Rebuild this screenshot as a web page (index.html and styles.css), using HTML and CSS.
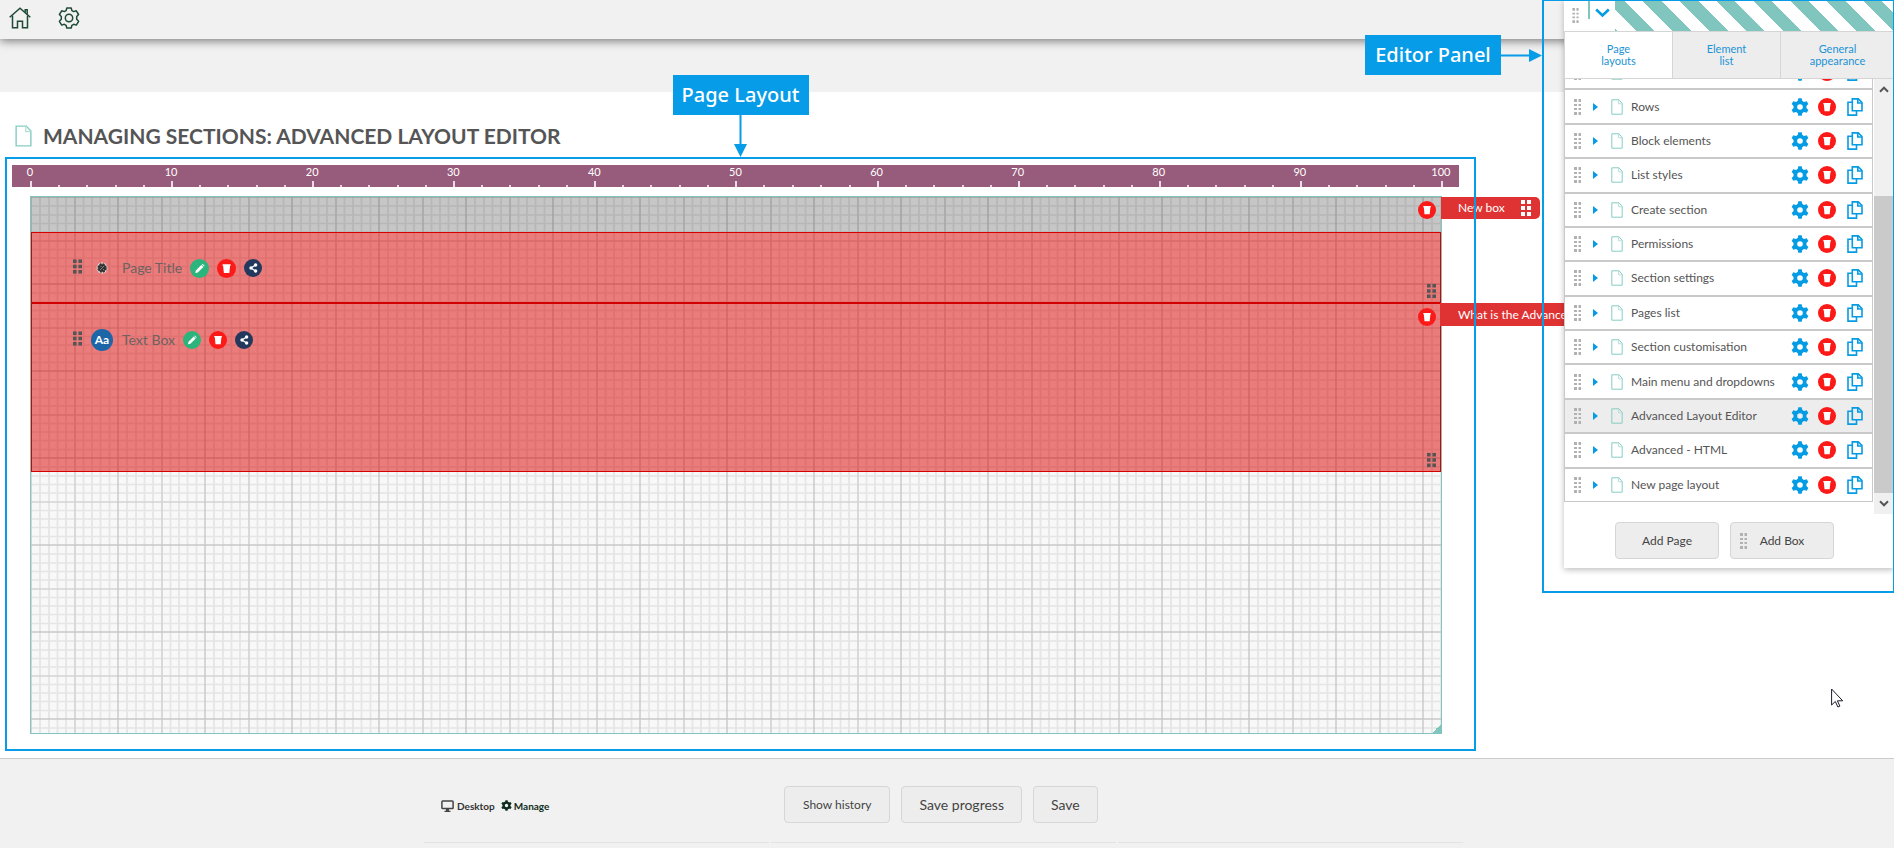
FILE: index.html
```html
<!DOCTYPE html>
<html lang="en">
<head>
<meta charset="utf-8">
<title>Managing sections: Advanced Layout Editor</title>
<link rel="stylesheet" href="styles.css">
</head>
<body>
<svg class="defs" aria-hidden="true">
  <symbol id="doc" viewBox="0 0 12 16"><path d="M.8.8h7.2l3.2 3.6v10.8H.8z" fill="none" stroke="#86cdc4"/><path d="M7.6 1v3.8h3.6" fill="none" stroke="#b5e0da"/></symbol>
  <symbol id="grip8" viewBox="0 0 7 16"><path d="M0 0h3v3H0zM4.500 0H7v3H4.500zM0 5h3v2H0zM4.500 5H7v2H4.500zM0 9h3v2H0zM4.500 9H7v2H4.500zM0 13h3v3H0zM4.500 13H7v3H4.500z" fill="currentColor"/></symbol>
  <symbol id="grip6" viewBox="0 0 10 16"><path d="M0 0h4v4H0zM6 0h4v4H6zM0 6h4v4H0zM6 6h4v4H6zM0 12h4v4H0zM6 12h4v4H6z" fill="currentColor"/></symbol>
  <symbol id="gear" viewBox="0 0 18 18"><g fill="currentColor"><path fill-rule="evenodd" d="M9 2.500a6.500 6.500 0 1 0 0 13A6.500 6.500 0 1 0 9 2.500zM9 6.200a2.800 2.800 0 1 1 0 5.600 2.800 2.800 0 1 1 0-5.600z"/><path id="tooth" d="M6.500 4l.8-3.700h3.400l.8 3.700z"/><use href="#tooth" transform="rotate(60 9 9)"/><use href="#tooth" transform="rotate(120 9 9)"/><use href="#tooth" transform="rotate(180 9 9)"/><use href="#tooth" transform="rotate(240 9 9)"/><use href="#tooth" transform="rotate(300 9 9)"/></g></symbol>
  <symbol id="trash" viewBox="0 0 18 18"><circle cx="9" cy="9" r="9" fill="#fb1a17"/><path d="M5.300 5h7.600v1.300H5.300zM5.800 6.300h6.600l-.7 7H6.500z" fill="#fff"/></symbol>
  <symbol id="pencil" viewBox="0 0 18 18"><circle cx="9" cy="9" r="9" fill="#2bb57c"/><path d="M5 13.200l.5-2.400 5.200-5.200 2 2-5.300 5.200zM11.200 5.100l.7-.6 1.900 1.900-.6.700z" fill="#fff"/></symbol>
  <symbol id="share" viewBox="0 0 18 18"><circle cx="9" cy="9" r="9" fill="#22385c"/><path d="M11.500 6L7 9l4.500 3" fill="none" stroke="#fff" stroke-width="1.300"/><circle cx="11.600" cy="6" r="1.700" fill="#fff"/><circle cx="7" cy="9" r="1.700" fill="#fff"/><circle cx="11.600" cy="12" r="1.700" fill="#fff"/></symbol>
  <symbol id="copy" viewBox="0 0 16 18"><g fill="none" stroke="#069ce3" stroke-width="1.600"><path d="M5.300.9h6L15 4.500v8.300H5.300z"/><path d="M10.800 1v4h4"/><path d="M5 4.300H1v12.800h8.500V13"/></g></symbol>
  <symbol id="tri" viewBox="0 0 5 8"><path d="M0 0l5 4-5 4z" fill="#069ce3"/></symbol>
</svg>

<header class="topbar">
  <a href="#" aria-label="Home"><svg width="22" height="22" viewBox="0 0 22 22"><g fill="none" stroke="#1f4a38" stroke-width="1.500"><path d="M.7 10.300L11 1.300l10.300 9"/><path d="M3.500 8.500v12.200h5v-6.500h5v6.500h5V8.500"/><path d="M16.200 5.500V2.800h2v4.500"/></g></svg></a>
  <a href="#" aria-label="Settings"><svg width="22" height="22" viewBox="0 0 22 22"><g fill="none" stroke="#1f4a38" stroke-width="1.500" stroke-linejoin="round"><path d="M8.800 1h4.400l.7 2.600 1.800 1 2.600-.8 2.300 3.700-1.900 2v2.800l1.900 2-2.300 3.800-2.600-.8-1.800 1-.7 2.700H8.800l-.7-2.700-1.800-1-2.600.8-2.300-3.800 1.900-2V9.500l-1.900-2 2.300-3.700 2.600.8 1.800-1z"/><circle cx="11" cy="11" r="3.700"/></g></svg></a>
</header>
<div class="subbar"></div>

<main class="main">
  <h1 class="title"><svg width="17" height="22" viewBox="0 0 12 16" preserveAspectRatio="none"><use href="#doc"/></svg>MANAGING SECTIONS: ADVANCED LAYOUT EDITOR</h1>

  <section class="workspace">
    <div class="ruler">
      <div class="seg"><span>0</span></div><div class="seg"><span>10</span></div><div class="seg"><span>20</span></div><div class="seg"><span>30</span></div><div class="seg"><span>40</span></div><div class="seg"><span>50</span></div><div class="seg"><span>60</span></div><div class="seg"><span>70</span></div><div class="seg"><span>80</span></div><div class="seg"><span>90</span></div><div class="seg last"><span>100</span></div>
    </div>
    <div class="canvas">
      <svg class="paper" aria-hidden="true">
        <defs><pattern id="grid" width="87" height="87" patternUnits="userSpaceOnUse">
          <rect width="87" height="87" fill="#f8f8f8"/>
          <path d="M9 0v87M18 0v87M26.500 0v87M35 0v87M52.500 0v87M61 0v87M69.500 0v87M78.500 0v87M0 9h87M0 18h87M0 26.500h87M0 35h87M0 52.500h87M0 61h87M0 69.500h87M0 78.500h87" stroke="#e5e5e5" stroke-width="1.700"/>
          <path d="M44 0v87M0 44h87" stroke="#d4d4d4" stroke-width="1.700"/>
          <path d="M87 0v87M0 87h87M0 0h87M0 0v87" stroke="#c8c8c8" stroke-width="1.400"/>
        </pattern></defs>
        <rect width="100%" height="100%" fill="url(#grid)"/>
      </svg>
      <div class="box box-new">
        <button class="icon del" aria-label="Delete box"><svg width="18" height="18"><use href="#trash"/></svg></button>
        <div class="tag"><span>New box</span><svg width="10" height="16"><use href="#grip6"/></svg></div>
      </div>
      <div class="box box-title">
        <div class="element">
          <svg class="grip" width="9" height="15" viewBox="0 0 10 16"><use href="#grip6"/></svg>
          <svg class="badge" width="22" height="22" viewBox="0 0 22 22"><circle cx="11" cy="11" r="4.800" fill="#e9dcdc" stroke="#e9dcdc" stroke-width="1.500" stroke-dasharray="2 1"/><circle cx="11" cy="11" r="3.800" fill="#333" stroke="#333" stroke-width="2" stroke-dasharray="2 1"/><path d="M9 13l4-4M9.500 10l1-1M12 13l1-1" stroke="#999" stroke-width=".8"/></svg>
          <span class="name">Page Title</span>
          <button class="icon" aria-label="Edit"><svg width="19" height="19"><use href="#pencil"/></svg></button>
          <button class="icon" aria-label="Delete"><svg width="19" height="19"><use href="#trash"/></svg></button>
          <button class="icon" aria-label="Share"><svg width="18" height="18"><use href="#share"/></svg></button>
        </div>
        <svg class="resize" width="9" height="16" viewBox="0 0 10 16"><use href="#grip6"/></svg>
      </div>
      <div class="box box-text">
        <button class="icon del" aria-label="Delete box"><svg width="18" height="18"><use href="#trash"/></svg></button>
        <div class="tag"><span>What is the Advanced</span></div>
        <div class="element">
          <svg class="grip" width="9" height="15" viewBox="0 0 10 16"><use href="#grip6"/></svg>
          <span class="badge aa">Aa</span>
          <span class="name">Text Box</span>
          <button class="icon" aria-label="Edit"><svg width="18" height="18"><use href="#pencil"/></svg></button>
          <button class="icon" aria-label="Delete"><svg width="18" height="18"><use href="#trash"/></svg></button>
          <button class="icon" aria-label="Share"><svg width="18" height="18"><use href="#share"/></svg></button>
        </div>
        <svg class="resize" width="9" height="16" viewBox="0 0 10 16"><use href="#grip6"/></svg>
      </div>
      <div class="corner"></div>
    </div>
    <div class="frame frame-layout"></div>
    <div class="callout callout-layout"><span class="label">Page Layout</span><svg width="13" height="42" viewBox="0 0 13 42"><path d="M5.500 0h2v29H13L6.500 42 0 29h5.500z" fill="#069ce8"/></svg></div>
  </section>
</main>

<footer class="footer">
  <div class="actions">
    <div class="device">
      <svg width="13" height="12" viewBox="0 0 13 12"><rect x=".9" y=".9" width="11.200" height="7.700" rx=".8" fill="none" stroke="#444" stroke-width="1.500"/><path d="M5 9h3v1.800h1.500V12h-6v-1.200H5z" fill="#444"/></svg><span>Desktop</span>
      <a href="#"><svg width="11" height="11" viewBox="0 0 18 18"><use href="#gear"/></svg>Manage</a>
    </div>
    <div class="buttons">
      <button class="btn small">Show history</button>
      <button class="btn">Save progress</button>
      <button class="btn">Save</button>
    </div>
  </div>
  <div class="rules"><i></i><i></i><i></i></div>
</footer>

<aside class="panel">
  <div class="panel-head">
    <svg class="grip" width="7" height="15" viewBox="0 0 7 16"><use href="#grip8"/></svg>
    <span class="bar"></span>
    <button class="icon" aria-label="Collapse"><svg width="15" height="10" viewBox="0 0 15 10"><path d="M1.200 1.500l6.300 6 6.300-6" fill="none" stroke="#069ce3" stroke-width="2.600"/></svg></button>
    <div class="stripes"></div>
  </div>
  <div class="tabs" role="tablist">
    <button role="tab" class="tab on">Page<br>layouts</button>
    <button role="tab" class="tab">Element<br>list</button>
    <button role="tab" class="tab">General<br>appearance</button>
  </div>
  <div class="scroller">
    <ul class="pages">
      <li class="row"><svg class="grip" width="7" height="16"><use href="#grip8"/></svg><svg class="tri" width="5" height="8"><use href="#tri"/></svg><svg width="12" height="16"><use href="#doc"/></svg><span></span><button class="icon gear"><svg width="18" height="18"><use href="#gear"/></svg></button><button class="icon"><svg width="18" height="18"><use href="#trash"/></svg></button><button class="icon copy"><svg width="16" height="18"><use href="#copy"/></svg></button></li>
      <li class="row"><svg class="grip" width="7" height="16"><use href="#grip8"/></svg><svg class="tri" width="5" height="8"><use href="#tri"/></svg><svg width="12" height="16"><use href="#doc"/></svg><span>Rows</span><button class="icon gear"><svg width="18" height="18"><use href="#gear"/></svg></button><button class="icon"><svg width="18" height="18"><use href="#trash"/></svg></button><button class="icon copy"><svg width="16" height="18"><use href="#copy"/></svg></button></li>
      <li class="row"><svg class="grip" width="7" height="16"><use href="#grip8"/></svg><svg class="tri" width="5" height="8"><use href="#tri"/></svg><svg width="12" height="16"><use href="#doc"/></svg><span>Block elements</span><button class="icon gear"><svg width="18" height="18"><use href="#gear"/></svg></button><button class="icon"><svg width="18" height="18"><use href="#trash"/></svg></button><button class="icon copy"><svg width="16" height="18"><use href="#copy"/></svg></button></li>
      <li class="row"><svg class="grip" width="7" height="16"><use href="#grip8"/></svg><svg class="tri" width="5" height="8"><use href="#tri"/></svg><svg width="12" height="16"><use href="#doc"/></svg><span>List styles</span><button class="icon gear"><svg width="18" height="18"><use href="#gear"/></svg></button><button class="icon"><svg width="18" height="18"><use href="#trash"/></svg></button><button class="icon copy"><svg width="16" height="18"><use href="#copy"/></svg></button></li>
      <li class="row"><svg class="grip" width="7" height="16"><use href="#grip8"/></svg><svg class="tri" width="5" height="8"><use href="#tri"/></svg><svg width="12" height="16"><use href="#doc"/></svg><span>Create section</span><button class="icon gear"><svg width="18" height="18"><use href="#gear"/></svg></button><button class="icon"><svg width="18" height="18"><use href="#trash"/></svg></button><button class="icon copy"><svg width="16" height="18"><use href="#copy"/></svg></button></li>
      <li class="row"><svg class="grip" width="7" height="16"><use href="#grip8"/></svg><svg class="tri" width="5" height="8"><use href="#tri"/></svg><svg width="12" height="16"><use href="#doc"/></svg><span>Permissions</span><button class="icon gear"><svg width="18" height="18"><use href="#gear"/></svg></button><button class="icon"><svg width="18" height="18"><use href="#trash"/></svg></button><button class="icon copy"><svg width="16" height="18"><use href="#copy"/></svg></button></li>
      <li class="row"><svg class="grip" width="7" height="16"><use href="#grip8"/></svg><svg class="tri" width="5" height="8"><use href="#tri"/></svg><svg width="12" height="16"><use href="#doc"/></svg><span>Section settings</span><button class="icon gear"><svg width="18" height="18"><use href="#gear"/></svg></button><button class="icon"><svg width="18" height="18"><use href="#trash"/></svg></button><button class="icon copy"><svg width="16" height="18"><use href="#copy"/></svg></button></li>
      <li class="row"><svg class="grip" width="7" height="16"><use href="#grip8"/></svg><svg class="tri" width="5" height="8"><use href="#tri"/></svg><svg width="12" height="16"><use href="#doc"/></svg><span>Pages list</span><button class="icon gear"><svg width="18" height="18"><use href="#gear"/></svg></button><button class="icon"><svg width="18" height="18"><use href="#trash"/></svg></button><button class="icon copy"><svg width="16" height="18"><use href="#copy"/></svg></button></li>
      <li class="row"><svg class="grip" width="7" height="16"><use href="#grip8"/></svg><svg class="tri" width="5" height="8"><use href="#tri"/></svg><svg width="12" height="16"><use href="#doc"/></svg><span>Section customisation</span><button class="icon gear"><svg width="18" height="18"><use href="#gear"/></svg></button><button class="icon"><svg width="18" height="18"><use href="#trash"/></svg></button><button class="icon copy"><svg width="16" height="18"><use href="#copy"/></svg></button></li>
      <li class="row"><svg class="grip" width="7" height="16"><use href="#grip8"/></svg><svg class="tri" width="5" height="8"><use href="#tri"/></svg><svg width="12" height="16"><use href="#doc"/></svg><span>Main menu and dropdowns</span><button class="icon gear"><svg width="18" height="18"><use href="#gear"/></svg></button><button class="icon"><svg width="18" height="18"><use href="#trash"/></svg></button><button class="icon copy"><svg width="16" height="18"><use href="#copy"/></svg></button></li>
      <li class="row on"><svg class="grip" width="7" height="16"><use href="#grip8"/></svg><svg class="tri" width="5" height="8"><use href="#tri"/></svg><svg width="12" height="16"><use href="#doc"/></svg><span>Advanced Layout Editor</span><button class="icon gear"><svg width="18" height="18"><use href="#gear"/></svg></button><button class="icon"><svg width="18" height="18"><use href="#trash"/></svg></button><button class="icon copy"><svg width="16" height="18"><use href="#copy"/></svg></button></li>
      <li class="row"><svg class="grip" width="7" height="16"><use href="#grip8"/></svg><svg class="tri" width="5" height="8"><use href="#tri"/></svg><svg width="12" height="16"><use href="#doc"/></svg><span>Advanced - HTML</span><button class="icon gear"><svg width="18" height="18"><use href="#gear"/></svg></button><button class="icon"><svg width="18" height="18"><use href="#trash"/></svg></button><button class="icon copy"><svg width="16" height="18"><use href="#copy"/></svg></button></li>
      <li class="row"><svg class="grip" width="7" height="16"><use href="#grip8"/></svg><svg class="tri" width="5" height="8"><use href="#tri"/></svg><svg width="12" height="16"><use href="#doc"/></svg><span>New page layout</span><button class="icon gear"><svg width="18" height="18"><use href="#gear"/></svg></button><button class="icon"><svg width="18" height="18"><use href="#trash"/></svg></button><button class="icon copy"><svg width="16" height="18"><use href="#copy"/></svg></button></li>
    </ul>
    <div class="scrollbar">
      <svg width="10" height="7" viewBox="0 0 10 7"><path d="M1 5.700l4-4 4 4" fill="none" stroke="#555" stroke-width="2"/></svg>
      <div class="thumb"></div>
      <svg width="10" height="7" viewBox="0 0 10 7"><path d="M1 1.300l4 4 4-4" fill="none" stroke="#555" stroke-width="2"/></svg>
    </div>
  </div>
  <div class="panel-foot">
    <button class="btn small">Add Page</button>
    <button class="btn small"><svg class="grip" width="7" height="16"><use href="#grip8"/></svg>Add Box</button>
  </div>
  <div class="frame frame-panel"></div>
  <div class="callout callout-panel"><span class="label">Editor Panel</span><svg width="41" height="13" viewBox="0 0 41 13"><path d="M0 5.500h28V0l13 6.500L28 13V7.500H0z" fill="#069ce8"/></svg></div>
</aside>

<svg class="cursor" width="13" height="20" viewBox="0 0 13 20" aria-hidden="true"><path d="M.6 1v16l3.700-3.500 2.600 5.500 2-.9-2.500-5.300h5.300z" fill="#fff" stroke="#1b1b2b"/></svg>
</body>
</html>
```
FILE: styles.css
```css
* { box-sizing: border-box; }

body {
  margin: 0;
  min-height: 100vh;
  display: flex;
  flex-direction: column;
  position: relative;
  overflow: hidden;
  background: #fff;
  color: #555;
  font: 12px/16px Lato, "Liberation Sans", sans-serif;
}

svg { display: block; flex: none; }
.defs { position: absolute; width: 0; height: 0; }
a { color: inherit; text-decoration: none; }

button { font: inherit; color: inherit; cursor: pointer; }
.icon { border: 0; padding: 0; background: none; flex: none; }

.topbar {
  display: flex;
  gap: 27px;
  height: 39px;
  padding: 7px 9px 0;
  background: #f1f1f1;
  box-shadow: 0 2px 9px rgba(0, 0, 0, .5);
  position: relative;
}
.subbar { height: 53px; background: #f1f1f1; }

.main { padding: 32px 435px 24px 12px; }

.title {
  display: flex;
  align-items: center;
  gap: 11px;
  margin: 0 0 17px;
  padding-left: 3px;
  font-size: 21px;
  line-height: 24px;
  font-weight: 700;
  white-space: nowrap;
}

.workspace { position: relative; }

.ruler {
  display: flex;
  height: 22px;
  padding: 0 16px 0 18px;
  background: #975b7b;
  color: #fff;
  font-size: 11px;
  line-height: 14px;
}
.seg {
  flex: 1;
  position: relative;
  background: repeating-linear-gradient(90deg, #e6d5de 0 2px, transparent 2px 20%) 0 100% / 100% 2px no-repeat;
}
.seg::before {
  content: "";
  position: absolute;
  left: 0;
  bottom: 0;
  width: 2px;
  height: 6px;
  background: #eadde4;
}
.seg.last { flex: 0 0 2px; background: none; }
.seg span {
  position: absolute;
  left: -20px;
  width: 40px;
  text-align: center;
}

.canvas {
  position: relative;
  margin: 9px 17px 0 18px;
  height: 538px;
  border: 1px solid #80c6bf;
}
.paper { position: absolute; width: 100%; height: 100%; }

.box { position: relative; }
.box-new { height: 35px; background: rgba(0, 0, 0, .2); }
.box-title,
.box-text {
  border: 1px solid #d40000;
  background: rgba(221, 0, 0, .5);
}
.box-title { height: 71px; padding: 24px 41px; }
.box-text { height: 169px; padding: 25px 41px; }

.del { position: absolute; right: 5px; top: 4px; }
.box-text .del { right: 4px; }
.tag {
  position: absolute;
  left: 100%;
  top: 0;
  height: 22px;
  display: flex;
  align-items: center;
  gap: 16px;
  padding: 0 9px 0 17px;
  border-radius: 0 5px 5px 0;
  background: #df3333;
  color: #fff;
  white-space: nowrap;
}
.box-text .tag { top: -1px; padding-left: 18px; height: 23px; }
.resize { position: absolute; right: 4px; bottom: 3px; color: #555; }

.element { display: flex; align-items: center; gap: 8px; height: 22px; }
.element .grip { color: #555; margin: 0 1px 3px 0; }
.badge { width: 22px; height: 22px; }
.aa {
  border-radius: 50%;
  background: #1c66a8;
  color: #fff;
  font: 700 12px/22px Lato, sans-serif;
  text-align: center;
}
.name { padding-left: 1px; color: #6c6360; font-size: 14px; }

.corner {
  position: absolute;
  right: 0;
  bottom: 0;
  width: 9px;
  height: 9px;
  background: linear-gradient(135deg, transparent 50%, #80c6bf 50%);
}

.frame { position: absolute; border: 2px solid #069ce8; pointer-events: none; }
.frame-layout { left: -7px; right: -17px; top: -8px; bottom: -17px; }
.frame-panel { left: -22px; right: 0; top: 0; bottom: -25px; border-top-width: 1px; border-right-width: 1px; }

.callout { position: absolute; display: flex; align-items: center; }
.callout-layout { flex-direction: column; left: 50%; bottom: 100%; margin: 0 0 8px -63px; }
.callout-panel { right: 100%; top: 35px; margin-right: 22px; }
.label {
  width: 136px;
  height: 40px;
  background: #069ce8;
  color: #fff;
  font: 500 20px/40px "Noto Sans", "Open Sans", sans-serif;
  text-align: center;
  white-space: nowrap;
}

.footer { flex: 1; border-top: 1px solid #ccc; background: #f1f1f1; }
.actions { display: flex; align-items: center; padding: 27px 0 0 441px; }
.device {
  display: flex;
  align-items: center;
  gap: 3px;
  width: 343px;
  padding-top: 2px;
  color: #333;
  font-size: 10px;
  font-weight: 700;
}
.device a { display: flex; align-items: center; gap: 2px; margin-left: 3px; color: #0f2d20; }
.buttons { display: flex; gap: 11px; }

.btn {
  height: 37px;
  padding: 0 17px;
  border: 1px solid #d6d6d6;
  border-radius: 4px;
  background: #ededed;
  color: #444;
  font-size: 14px;
}
.btn.small { padding: 0 18px; font-size: 12px; }

.rules { display: flex; gap: 2px; margin: 19px 431px 0 424px; }
.rules i { flex: 1; height: 1px; background: #e3e3e3; }

.panel {
  position: absolute;
  top: 0;
  right: 0;
  width: 330px;
  background: #fff;
  box-shadow: 0 2px 6px rgba(0, 0, 0, .25);
}
.panel-head { display: flex; height: 31px; padding-left: 8px; }
.grip { color: #b1b1b1; }
.panel-head .grip { margin-top: 8px; }
.bar { width: 2px; height: 19px; margin: 0 5px 0 9px; background: #80c6bf; }
.panel-head .icon { align-self: flex-start; margin: 8px 5px 0 0; }
.stripes {
  flex: 1;
  background: repeating-linear-gradient(45deg, #80c6bf 0 2px, #fff 2px 15px, #80c6bf 15px 26px);
}

.tabs {
  display: grid;
  grid-template-columns: 107px 108px 1fr;
  height: 48px;
  border: 1px solid #d5d5d5;
  border-right: 0;
}
.tab {
  border: 0;
  padding: 0;
  background: #ededed;
  color: #1c93d6;
  font-size: 11px;
  line-height: 12px;
}
.tab + .tab { border-left: 1px solid #d5d5d5; }
.tab.on { background: #fff; }

.scroller {
  display: flex;
  align-items: flex-end;
  justify-content: space-between;
  height: 435px;
  overflow: hidden;
}
.pages {
  display: grid;
  grid-auto-rows: 1fr;
  height: 447px;
  width: 309px;
  margin: 0 0 12px;
  padding: 0;
  list-style: none;
}
.row {
  display: flex;
  align-items: center;
  min-width: 0;
  padding: 0 9px;
  border: 1px solid #c9c9c9;
}
.row.on { background: #ededed; }
.row .tri { margin: 0 13px 0 12px; }
.row span { flex: 1; padding-left: 8px; white-space: nowrap; }
.row .gear { color: #069ce3; margin-right: 9px; }
.row .copy { margin-left: 11px; }

.scrollbar {
  display: flex;
  flex-direction: column;
  align-items: center;
  justify-content: space-between;
  width: 20px;
  height: 435px;
  padding: 7px 0;
  background: #f0f0f0;
}
.thumb { width: 100%; height: 297px; margin-top: 96px; background: #cacaca; }

.panel-foot { display: flex; justify-content: center; gap: 11px; padding: 8px 9px 9px 0; }
.panel-foot .btn {
  display: flex;
  align-items: center;
  justify-content: center;
  width: 104px;
}
.panel-foot .grip { margin: 0 13px 0 -20px; }

.cursor { position: absolute; left: 1831px; top: 688px; }
```
